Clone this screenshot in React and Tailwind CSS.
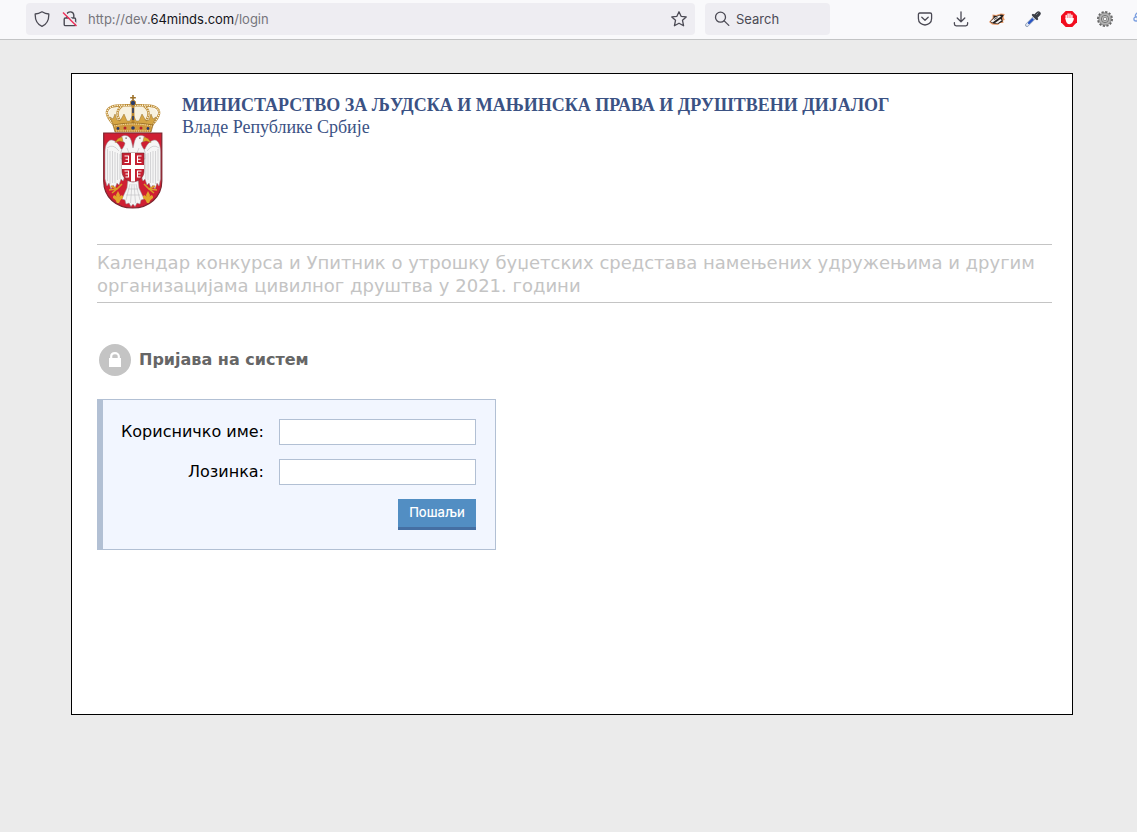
const Crest = () => (
    <svg viewBox="0 0 61 115" className="mt-px h-[115px] w-[61px] shrink-0" role="img" aria-label="Грб Републике Србије">
        {/* Круна */}
        <path d="M12 28 C5 20 6 15 11 13 C18 10 25 12 31 11 C37 12 44 10 51 13 C56 15 57 20 50 28 Z" fill="#f7f1df" />
        <g fill="none" stroke="#b98730" strokeWidth="2.4">
            <path d="M12 30 C3 20 3 15 9 12 C16 9 25 11 31 10 C37 11 46 9 53 12 C59 15 59 20 50 30" />
            <path d="M20 29 C14 21 14 15 20 11 M42 29 C48 21 48 15 42 11" />
        </g>
        <g fill="none" stroke="#fff6da" strokeWidth="1.3" strokeDasharray="1.3 1">
            <path d="M12 30 C3 20 3 15 9 12 C16 9 25 11 31 10 C37 11 46 9 53 12 C59 15 59 20 50 30" />
            <path d="M20 29 C14 21 14 15 20 11 M42 29 C48 21 48 15 42 11" />
        </g>
        <path d="M12 31 L8 22 L11 24 L13 19 L15 25 L18 26 L22 19 L25 26 L28 26 L31 19 L34 26 L37 26 L40 19 L44 26 L47 25 L49 19 L51 24 L54 22 L50 31 Z" fill="#d6a645" stroke="#96702c" strokeWidth=".5" />
        <path d="M29.6 10 h2.8 v18 h-2.8 Z" fill="#b9852d" />
        <path d="M30.2 13 h1.6 v5 h-1.6 Z M30.2 21 h1.6 v4 h-1.6 Z" fill="#26386a" />
        <circle cx="31" cy="8" r="2.7" fill="#2b3c6a" stroke="#c18a31" strokeWidth=".9" />
        <path d="M30.2 0 h1.6 v2 h2 v1.6 h-2 v2.2 h-1.6 v-2.2 h-2 v-1.6 h2 Z" fill="#9c7029" />
        <path d="M11 30 Q31 26 51 30 L49 37 H13 Z" fill="#cf9a3e" stroke="#8a6424" strokeWidth=".7" />
        <path d="M12 31 Q31 27 50 31 M14 36 H48" fill="none" stroke="#fff1c4" strokeWidth=".9" strokeDasharray="1.2 1" />
        <g fill="#26386a">
            <circle cx="16" cy="33.5" r="1.4" />
            <circle cx="23" cy="33" r="1.5" fill="#b5222b" />
            <circle cx="31" cy="33" r="1.8" />
            <circle cx="39" cy="33" r="1.5" fill="#b5222b" />
            <circle cx="46" cy="33.5" r="1.4" />
        </g>
        {/* Штит */}
        <path d="M1.7 38 H59.8 V86 C59.8 102 47 113 30.7 113 C14 113 1.7 102 1.7 86 Z" fill="#cf1f33" stroke="#7c2630" strokeWidth="1.2" />
        {/* Орао */}
        <g fill="#f5f5f5" stroke="#96969a" strokeWidth=".5">
            <path d="M19 54 C17 49 13 45 9 45 C5 46 3 51 3 57 V84 L5 91 L7 88 L9 94 L11 90 L13 93 L15 88 L17 90 L19 84 L21 86 L24 78 V56 Z" />
            <path d="M43 54 C45 49 49 45 53 45 C57 46 58.5 51 58.5 57 V84 L57 91 L55 88 L53 94 L51 90 L49 93 L47 88 L45 90 L43 84 L41 86 L38 78 V56 Z" />
            <path d="M18 44 C19 40 25 39 28 43 C30 46 30 50 31 53 C32 50 32 46 34 43 C37 39 43 40 44 44 C43 47 40 46 39 48 C39 51 42 53 43 57 V64 H19 V57 C20 53 23 51 23 48 C22 46 19 47 18 44 Z" />
            <path d="M26 84 H36 L37 93 L42 104 L39 105 L38 109 L35 108 L33 111.5 L31 109 L29 111.5 L27 108 L24 109 L23 105 L20 104 L25 93 Z" />
        </g>
        <g fill="none" stroke="#bdbdc1" strokeWidth=".6">
            <path d="M5.5 54 V86 M8 56 V89 M10.5 56 V88 M13 57 V88 M15.5 58 V85 M18 59 V84" />
            <path d="M56 54 V86 M53.5 56 V89 M51 56 V88 M48.5 57 V88 M46 58 V85 M43.8 59 V84" />
            <path d="M5 53 Q11 48 17 56 M57 53 Q51 48 45 56 M25 53 L27 58 M37 53 L35 58" />
            <path d="M28 89 L24 105 M30 89 L28.5 108 M32 89 L33.5 108 M34 89 L38 105 M26 94 H36 M24 100 H38" />
        </g>
        <path d="M20 42 L16 43.5 L13 47.5 L17.5 46 L21 46.5 Z M42 42 L46 43.5 L49 47.5 L44.5 46 L41 46.5 Z" fill="#e0a52b" stroke="#8d651e" strokeWidth=".4" />
        <path d="M23.5 42.5 h1.2 v1.2 h-1.2 Z M37.3 42.5 h1.2 v1.2 h-1.2 Z" fill="#44444c" />
        {/* Мали штит са крстом и оцилима */}
        <path d="M20 58 H42 V76 C42 82 38 86 31 87 C24 86 20 82 20 76 Z" fill="#c51f31" stroke="#6e2a30" strokeWidth=".6" />
        <path d="M29 58 H33 V70 H42 V74 H33 V86.6 H29 V74 H20 V70 H29 Z" fill="#fff" />
        <g fill="none" stroke="#fff" strokeWidth="1.1">
            <path d="M22.5 61 H26.5 V67.5 H22.5 M26.5 64.2 H23.5" />
            <path d="M39.5 61 H35.5 V67.5 H39.5 M35.5 64.2 H38.5" />
            <path d="M22.5 76 H26.5 V82 H23.5 M26.5 79 H23.5" />
            <path d="M39.5 76 H35.5 V82 H38.5 M35.5 79 H38.5" />
        </g>
        <g fill="none" stroke="#d99d29" strokeWidth="1.6">
            <path d="M20 89 L15 94 L9 91 M15 94 L7 95 M15 94 L10 98" />
            <path d="M42 89 L47 94 L53 91 M47 94 L55 95 M47 94 L52 98" />
        </g>
        <g fill="#e2a72b">
            <path d="M16 96 L18 100 L17.5 102 C19 99 21.5 100 21 103 L18.5 105 L17 108 H15 L13.5 105 L11 103 C10.5 100 13 99 14.5 102 L14 100 Z" />
            <path d="M46 96 L48 100 L47.5 102 C49 99 51.5 100 51 103 L48.5 105 L47 108 H45 L43.5 105 L41 103 C40.5 100 43 99 44.5 102 L44 100 Z" />
        </g>
    </svg>
);

const ShieldIcon = () => (
    <svg viewBox="0 0 16 16" className="w-4 h-4" fill="none" stroke="#4b4a54" strokeWidth="1.3" strokeLinejoin="round">
        <path d="M8 .8 C10 2 12.5 2.9 14.8 3 C15 9 12.5 13.5 8 15.3 C3.5 13.5 1 9 1.2 3 C3.5 2.9 6 2 8 .8 Z" />
    </svg>
);

const InsecureIcon = () => (
    <svg viewBox="0 0 16 18" className="w-4 h-[18px]" fill="none" stroke="#4b4a54" strokeWidth="1.4">
        <path d="M5 4 C5.6 1.2 11.4 .7 11.8 5 V8 M4.8 8 H12.4 Q13.6 8 13.6 9.2 V14.4 Q13.6 15.6 12.4 15.6 H3.4 Q2.2 15.6 2.2 14.4 V9.2 Q2.2 8 3.4 8 H4.8 V5.6" />
        <path d="M2 1.5 L15.5 15" stroke="#eeedf2" strokeWidth="1.4" />
        <path d="M1 2.5 L14.5 16" stroke="#f0305a" strokeWidth="1.4" />
    </svg>
);

const StarIcon = () => (
    <svg viewBox="0 0 16 16" className="w-4 h-4" fill="none" stroke="#4b4a54" strokeWidth="1.3" strokeLinejoin="round">
        <path d="M8 .8 L10.1 5.3 L15.2 5.9 L11.5 9.3 L12.6 14.8 L8 12.2 L3.4 14.8 L4.5 9.3 L.8 5.9 L5.9 5.3 Z" />
    </svg>
);

const SearchIcon = () => (
    <svg viewBox="0 0 16 16" className="h-4 w-4 shrink-0" fill="none" stroke="#4b4a54" strokeWidth="1.3" strokeLinecap="round">
        <circle cx="6.5" cy="6.2" r="5" />
        <path d="M10.2 9.9 L14.8 14.4" />
    </svg>
);

const PocketIcon = () => (
    <svg viewBox="0 0 16 16" className="w-4 h-4" fill="none" stroke="#4b4a54" strokeWidth="1.3" strokeLinecap="round" strokeLinejoin="round">
        <path d="M2.8 2 H13.2 Q14.6 2 14.6 3.4 V7.4 C14.6 16.2 1.4 16.2 1.4 7.4 V3.4 Q1.4 2 2.8 2 Z M4.8 6.2 L8 9.2 L11.2 6.2" />
    </svg>
);

const DownloadIcon = () => (
    <svg viewBox="0 0 16 16" className="w-4 h-4" fill="none" stroke="#4b4a54" strokeWidth="1.3" strokeLinecap="round" strokeLinejoin="round">
        <path d="M8 .8 V10.6 M4.2 7 L8 10.8 L11.8 7 M1.4 11.6 V13 Q1.4 14.8 3.2 14.8 H12.8 Q14.6 14.8 14.6 13 V11.6" />
    </svg>
);

const BadgerIcon = () => (
    <svg viewBox="0 0 16 16" className="w-4 h-4">
        <path d="M0 11 L3.5 7 L3.5 3.5 L7 4 L12 2.5 L15.8 3 L14.5 6 L15.8 9 L14 9.5 L14.5 12 L11 12 L9 14 L3 13.5 Z" fill="#eb9b68" />
        <path d="M1 10.8 L4.5 7 L4.5 4.5 L7.5 5 L12 3.5 L14.8 4 L13 7 L13.8 10.5 L9 13 L4 12.6 Z" fill="#23201f" />
        <path d="M1.5 10.4 L6 6.4 L10.5 4.6 L12 5.4 L8.5 7.8 L3.6 11.6 Z M6 12 L11.5 8 L12.8 9.2 L8.5 12.4 Z" fill="#f7f2ee" />
        <path d="M5 8.6 L8.5 6.4" stroke="#23201f" strokeWidth=".8" />
    </svg>
);

const DropperIcon = () => (
    <svg viewBox="0 0 16 16" className="w-4 h-4" strokeLinecap="round">
        <path d="M2 14 L9.5 6.5" stroke="#8595ae" strokeWidth="3.6" />
        <path d="M2.2 13.8 L9.5 6.5" stroke="#dfe7f3" strokeWidth="2.4" />
        <path d="M4 12 L7.6 8.4" stroke="#2854c4" strokeWidth="2.2" />
        <path d="M8 4 L12 8" stroke="#3b3e45" strokeWidth="2.4" />
        <path d="M11 5 L13.4 2.6" stroke="#3b3e45" strokeWidth="4.6" />
        <path d="M11.4 3.6 L13 2" stroke="#858991" strokeWidth="1" />
    </svg>
);

const AdBlockIcon = () => (
    <svg viewBox="0 0 16 16" className="w-4 h-4">
        <path d="M4.7 0 H11.3 L16 4.7 V11.3 L11.3 16 H4.7 L0 11.3 V4.7 Z" fill="#f20d1f" />
        <path d="M5.2 8 V4.4 M7.1 7.5 V3 M9 7.5 V3 M10.9 8 V4.2" stroke="#fff" strokeWidth="1.4" strokeLinecap="round" />
        <path d="M4.5 7 H11.6 L13 7.2 L12.4 9.6 L11 12 Q8.5 14.2 6 12.2 Q4.5 10.5 4.5 7 Z" fill="#fff" />
    </svg>
);

const GearIcon = () => (
    <svg viewBox="0 0 16 16" className="w-4 h-4">
        <circle cx="8" cy="8" r="7" fill="none" stroke="#666" strokeWidth="2" strokeDasharray="2.2 1.46" />
        <circle cx="8" cy="8" r="6.2" fill="#b3b3b3" stroke="#777" strokeWidth=".8" />
        <circle cx="8" cy="8" r="3.6" fill="#c9c9c9" stroke="#6b6b6b" strokeWidth=".9" />
        <circle cx="8" cy="8" r="1.8" fill="#f4f4f4" stroke="#6e6e6e" strokeWidth=".8" />
    </svg>
);

const CloudIcon = () => (
    <svg viewBox="0 0 16 16" className="w-4 h-4" fill="none" stroke="#7b9fe0" strokeWidth="1.3">
        <path d="M5 1.5 C2 3 2 5 3 6 M3 6 H12 M3 6 C.2 6 .2 10 3 10 H4.5 V6" />
    </svg>
);

const extensions = [
    { name: 'Pocket', Icon: PocketIcon },
    { name: 'Downloads', Icon: DownloadIcon },
    { name: 'Privacy Badger', Icon: BadgerIcon },
    { name: 'Color picker', Icon: DropperIcon },
    { name: 'AdBlock', Icon: AdBlockIcon },
    { name: 'Settings', Icon: GearIcon },
    { name: 'Cloud', Icon: CloudIcon },
];

const BrowserBar = () => (
    <div className="flex h-10 items-start overflow-hidden border-b border-[#c3c4c5] bg-[#f9f9fb] pt-[3px] pl-[26px] font-['Inter',sans-serif] text-[13px]">
        <div className="flex h-8 flex-1 items-center rounded bg-[#eeedf2] px-2">
            <ShieldIcon />
            <span className="ml-3">
                <InsecureIcon />
            </span>
            <p className="ml-[10px] flex-1 pt-[2px] text-[#76757c]">
                http://dev.<span className="text-[#15141a]">64minds.com</span>/login
            </p>
            <button aria-label="Bookmark">
                <StarIcon />
            </button>
        </div>
        <div className="ml-[10px] flex h-8 w-[125px] items-center gap-[6px] rounded bg-[#eeedf2] px-[9px]">
            <SearchIcon />
            <input
                type="text"
                placeholder="Search"
                aria-label="Search"
                className="w-full min-w-0 bg-transparent pt-[2px] outline-none placeholder:text-[#4b4a54]"
            />
        </div>
        <div className="ml-[87px] flex h-8 w-[220px] items-center gap-5 overflow-hidden">
            {extensions.map(({ name, Icon }) => (
                <button key={name} aria-label={name} className="shrink-0">
                    <Icon />
                </button>
            ))}
        </div>
    </div>
);

const LoginForm = () => (
    <form
        className="mt-[23px] flex w-[399px] flex-col gap-[14px] border border-l-[6px] border-[#b2c0d4] bg-[#f2f6ff] py-[19px] pr-[19px]"
        onSubmit={(e) => e.preventDefault()}
    >
        <div className="flex items-center justify-end gap-[15px]">
            <label htmlFor="username" className="text-base leading-[26px]">Корисничко име:</label>
            <input id="username" type="text" className="h-[26px] w-[197px] border border-[#b2c0d4] bg-white px-1 outline-none" />
        </div>
        <div className="flex items-center justify-end gap-[15px]">
            <label htmlFor="password" className="text-base leading-[26px]">Лозинка:</label>
            <input id="password" type="password" className="h-[26px] w-[197px] border border-[#b2c0d4] bg-white px-1 outline-none" />
        </div>
        <button
            type="submit"
            className="h-[31px] w-[78px] self-end border-b-[3px] border-[#456fa3] bg-[#528ec3] font-['Inter',sans-serif] text-[13px] font-medium text-white"
        >
            Пошаљи
        </button>
    </form>
);

export default function App() {
    return (
        <div className="min-h-screen bg-[#ebebeb]">
            <BrowserBar />
            <main className="mt-[33px] mr-16 ml-[71px] min-h-[642px] border border-black bg-white pt-5 pr-5 pl-[25px] font-['DejaVu_Sans',sans-serif] text-black">
                <header className="flex gap-[19px] pl-[5px] font-['Liberation_Serif',serif] text-lg leading-[22px] text-[#3b5284]">
                    <Crest />
                    <div>
                        <h1 className="font-bold">МИНИСТАРСТВО ЗА ЉУДСКА И МАЊИНСКА ПРАВА И ДРУШТВЕНИ ДИЈАЛОГ</h1>
                        <p>Владе Републике Србије</p>
                    </div>
                </header>
                <h2 className="mt-[34px] border-y border-[#c4c4c4] pt-[6px] pb-[5px] text-lg leading-[23px] text-[#c4c4c4]">
                    Календар конкурса и Упитник о утрошку буџетских средстава намењених удружењима и другим организацијама цивилног друштва у 2021. години
                </h2>
                <div className="mt-[41px] flex items-center gap-2 pl-[2px]">
                    <svg viewBox="0 0 32 32" className="h-8 w-8">
                        <circle cx="16" cy="16" r="16" fill="#c4c4c4" />
                        <path d="M10 14 H22 V23 H10 Z" fill="#fff" />
                        <path d="M12.2 15 V12.6 C12.2 8 19.8 8 19.8 12.6 V15" fill="none" stroke="#fff" strokeWidth="2.2" />
                    </svg>
                    <h3 className="text-base font-bold text-[#666]">Пријава на систем</h3>
                </div>
                <LoginForm />
            </main>
        </div>
    );
}
